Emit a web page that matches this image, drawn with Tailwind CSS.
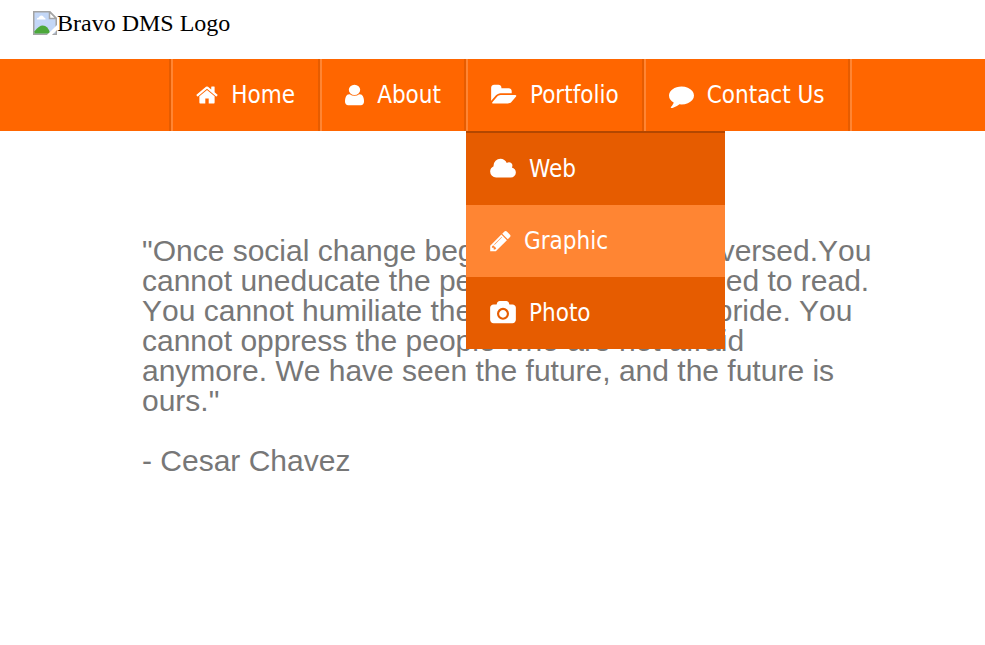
<!DOCTYPE html>
<html lang="en">
<head>
  <meta charset="UTF-8">
  <meta name="viewport" content="width=device-width, initial-scale=1.0">
  <title>Bravo DMS</title>
  <script src="https://cdn.jsdelivr.net/npm/@tailwindcss/browser@4"></script>
</head>
<body class="bg-white">
  <!-- Logo -->
  <header class="flex items-start px-8 pt-[9px] pb-[22px]">
    <a href="#" class="flex items-center pl-px font-['Liberation_Serif',serif] text-2xl leading-7 text-black">
      <svg class="w-6 h-6" viewBox="0 0 16 16" aria-hidden="true">
        <path d="M.5.5h10.700l4.300 4.300v10.700H.5z" fill="#c3d7f7" stroke="#a3a3a3"/>
        <path d="M2.500 5.600q0-1.300 1.400-1.300.4-1.300 1.700-1.300t1.700 1.300q1.100.1 1.100 1.300z" fill="#fff"/>
        <path d="M1 15v-1.500q3-3.800 5.500-3.800 3.500 0 5 5.300z" fill="#4ca83a"/>
        <path d="M11 .5v4.500h4.500z" fill="#fff" stroke="#a3a3a3"/>
        <path d="M9.300 16L16 9.300v3.300L12.600 16z" fill="#fff"/>
      </svg>
      <span>Bravo DMS Logo</span>
    </a>
  </header>

  <!-- Navbar -->
  <nav class="flex justify-center pl-9 bg-[#ff6600] text-white text-2xl font-['DejaVu_Sans_Condensed','Noto_Sans',sans-serif]">
    <ul class="flex border-l-2 border-l-[#e65c00] border-r-2 border-r-[#ff8533]">
      <li class="border-l-2 border-l-[#ff8533] border-r-2 border-r-[#e65c00]">
        <a href="#" class="flex items-center gap-[13px] h-[72px] px-[23px]">
          <svg class="h-6 w-[22px]" viewBox="64 0 1664 1792" fill="currentColor" aria-hidden="true"><path d="M1472 992v480q0 26-19 45t-45 19h-384v-384h-256v384h-384q-26 0-45-19t-19-45v-480q0-1 .5-3t.5-3l575-474 575 474q1 2 1 6zm223-69l-62 74q-8 9-21 11h-3q-13 0-21-7l-692-577-692 577q-12 8-24 7-13-2-21-11l-62-74q-8-10-7-23.5t11-21.5l719-599q32-26 76-26t76 26l244 204v-195q0-14 9-23t23-9h192q14 0 23 9t9 23v408l219 182q10 8 11 21.5t-7 23.5z"/></svg>
          <span>Home</span>
        </a>
      </li>
      <li class="border-l-2 border-l-[#ff8533] border-r-2 border-r-[#e65c00]">
        <a href="#" class="flex items-center gap-[13px] h-[72px] px-[23px]">
          <svg class="h-6 w-[19px]" viewBox="256 0 1280 1792" preserveAspectRatio="none" fill="currentColor" aria-hidden="true"><path d="M1536 1399q0 109-62.5 187t-150.5 78h-854q-88 0-150.5-78t-62.5-187q0-85 8.5-160.5t31.5-152 58.5-131 94-89 134.500-34.500q131 128 313 128t313-128q76 0 134.500 34.500t94 89 58.500 131 31.500 152 8.500 160.500zm-256-887q0 159-112.500 271.500t-271.500 112.500-271.500-112.500-112.500-271.500 112.500-271.500 271.500-112.500 271.500 112.500 112.500 271.500z"/></svg>
          <span>About</span>
        </a>
      </li>
      <li class="relative border-l-2 border-l-[#ff8533] border-r-2 border-r-[#e65c00]">
        <a href="#" class="flex items-center gap-[13px] h-[72px] px-[23px]">
          <svg class="h-6 w-[26px]" viewBox="-64 0 1920 1792" fill="currentColor" aria-hidden="true"><path d="M1815 952q0 31-31 66l-336 396q-43 51-120.500 86.500t-143.500 35.500h-1088q-34 0-60.500-13t-26.500-43q0-31 31-66l336-396q43-51 120.500-86.500t143.500-35.500h1088q34 0 60.500 13t26.500 43zm-343-344v160h-832q-94 0-197 47.500t-164 119.500l-337 396-5 6q0-4-.5-12.500t-.5-12.500v-960q0-92 66-158t158-66h320q92 0 158 66t66 158v32h544q92 0 158 66t66 158z"/></svg>
          <span>Portfolio</span>
        </a>
        <!-- Portfolio submenu -->
        <ul class="absolute z-10 top-full -left-0.5 w-[259px] bg-[#e65c00] border-t-2 border-t-[#b34700]">
          <li>
            <a href="#" class="flex items-center gap-[13px] h-[72px] px-6 hover:bg-[#ff8533]">
              <svg class="h-6 w-[26px]" viewBox="-64 0 1920 1792" fill="currentColor" aria-hidden="true"><path d="M1856 1152q0 159-112.500 271.500t-271.500 112.500h-1088q-185 0-316.500-131.500t-131.500-316.500q0-132 71-241.500t187-163.500q-2-28-2-43 0-212 150-362t362-150q158 0 286.500 88t187.500 230q70-62 166-62 106 0 181 75t75 181q0 75-41 138 129 30 213 134.500t84 239.500z"/></svg>
              <span>Web</span>
            </a>
          </li>
          <li>
            <a href="#" class="flex items-center gap-[13px] h-[72px] px-6 bg-[#ff8533]">
              <svg class="h-6 w-[21px]" viewBox="128 0 1536 1792" fill="currentColor" aria-hidden="true"><path d="M491 1536l91-91-235-235-91 91v107h128v128h107zm523-928q0-22-22-22-10 0-17 7l-542 542q-7 7-7 17 0 22 22 22 10 0 17-7l542-542q7-7 7-17zm-54-192l416 416-832 832h-416v-416zm683 96q0 53-37 90l-166 166-416-416 166-165q36-38 90-38 53 0 91 38l235 234q37 39 37 91z"/></svg>
              <span>Graphic</span>
            </a>
          </li>
          <li>
            <a href="#" class="flex items-center gap-[13px] h-[72px] px-6 hover:bg-[#ff8533]">
              <svg class="h-6 w-[26px]" viewBox="-64 0 1920 1792" fill="currentColor" aria-hidden="true"><path d="M896 672q119 0 203.500 84.500t84.500 203.500-84.500 203.500-203.500 84.500-203.500-84.500-84.500-203.500 84.500-203.500 203.500-84.500zm704-416q106 0 181 75t75 181v896q0 106-75 181t-181 75h-1408q-106 0-181-75t-75-181v-896q0-106 75-181t181-75h224l51-136q19-49 69.500-84.500t103.500-35.500h512q53 0 103.500 35.500t69.500 84.500l51 136h224zm-704 1152q185 0 316.500-131.500t131.500-316.500-131.500-316.500-316.500-131.500-316.500 131.500-131.500 316.500 131.500 316.500 316.500 131.500z"/></svg>
              <span>Photo</span>
            </a>
          </li>
        </ul>
      </li>
      <li class="border-l-2 border-l-[#ff8533] border-r-2 border-r-[#e65c00]">
        <a href="#" class="flex items-center gap-[13px] h-[72px] px-[23px]">
          <svg class="h-[25px] w-[25px]" viewBox="0 0 1792 1792" fill="currentColor" aria-hidden="true"><path d="M1792 896q0 174-120 321.500t-326 233-450 85.500q-70 0-145-8-198 175-460 242-49 14-114 22-17 2-30.500-9t-17.500-29v-1q-3-4-.5-12t2-10 4.500-9.500l6-9 7-8.500 8-9q7-8 31-34.500t34.500-38 31-39.500 32.500-51 27-59 26-76q-157-89-247.500-220t-90.500-281q0-130 71-248.500t191-204.500 286-136.500 348-50.500q244 0 450 85.500t326 233 120 321.500z"/></svg>
          <span>Contact Us</span>
        </a>
      </li>
    </ul>
  </nav>

  <!-- Quote -->
  <main class="pt-[105px] pl-[142px] pr-[110px] font-['Liberation_Sans',sans-serif] text-3xl leading-[30px] text-[#777777] [font-kerning:none]">
    <blockquote>
      <p>"Once social change begins, it cannot be reversed.You cannot uneducate the person who has learned to read. You cannot humiliate the person who feels pride. You cannot oppress the people who are not afraid anymore. We have seen the future, and the future is ours."</p>
      <p class="mt-[30px]">- Cesar Chavez</p>
    </blockquote>
  </main>
</body>
</html>
